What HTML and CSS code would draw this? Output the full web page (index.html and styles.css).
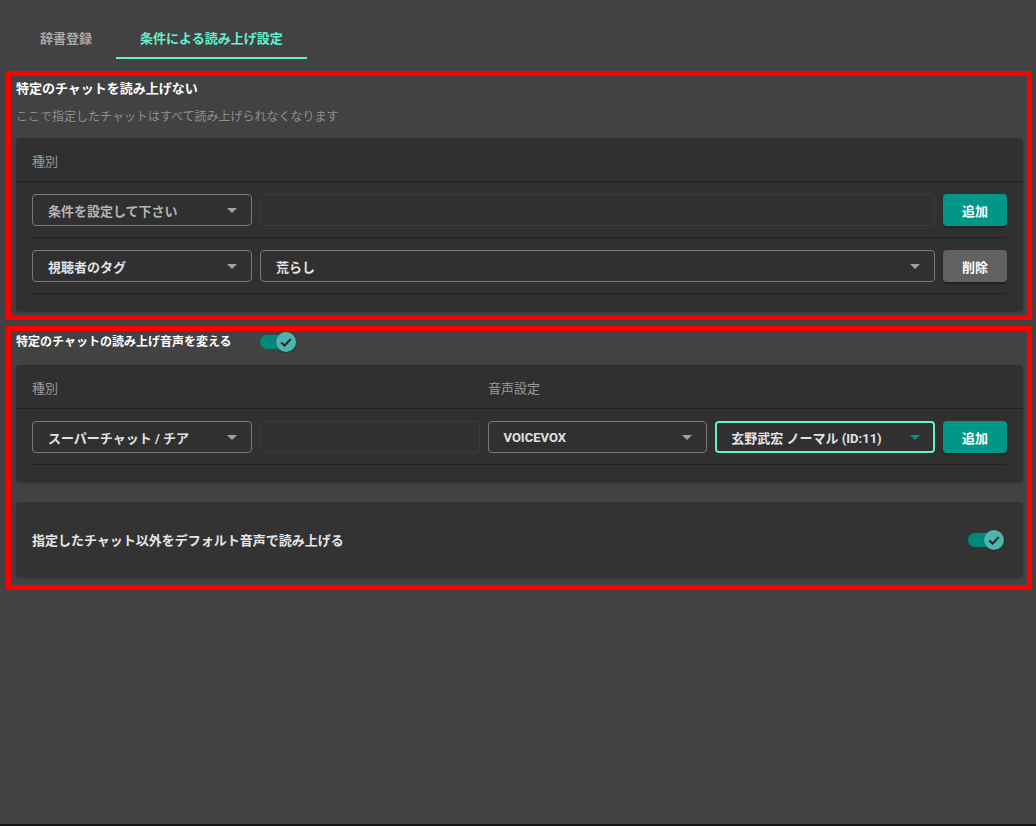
FILE: index.html
```html
<!DOCTYPE html>
<html lang="ja">
<head>
  <meta charset="UTF-8" />
  <meta name="viewport" content="width=device-width, initial-scale=1.0"/>
  <title>読み上げ設定</title>
  <link rel="stylesheet" href="styles.css">
</head>
<body>
  <div class="page">

    <!-- Tabs -->
    <div class="tabs">
      <div class="tab">辞書登録</div>
      <div class="tab active">条件による読み上げ設定</div>
    </div>

    <!-- Ignore chats -->
    <section class="panel panel-ignore">
      <div class="panel-title">特定のチャットを読み上げない</div>
      <div class="panel-desc">ここで指定したチャットはすべて読み上げられなくなります</div>

      <div class="card">
        <div class="card-head grid-ignore">
          <span class="col-label">種別</span>
        </div>
        <div class="rule-row grid-ignore">
          <div class="select placeholder">条件を設定して下さい<span class="caret"></span></div>
          <div class="text-field"></div>
          <button class="btn btn-add">追加</button>
        </div>
        <div class="rule-row grid-ignore">
          <div class="select">視聴者のタグ<span class="caret"></span></div>
          <div class="select outlined">荒らし<span class="caret"></span></div>
          <button class="btn btn-remove">削除</button>
        </div>
      </div>
    </section>

    <!-- Voice per chat -->
    <section class="panel panel-voice">
      <div class="panel-head">
        <div class="panel-title">特定のチャットの読み上げ音声を変える</div>
        <div class="switch on">
          <div class="switch-track"></div>
          <div class="switch-thumb">
            <svg width="20" height="20" viewBox="0 0 20 20"><path d="M5.2 10.4 L8.6 13.6 L14.8 7" fill="none" stroke="#1f2a28" stroke-width="2"/></svg>
          </div>
        </div>
      </div>

      <div class="card">
        <div class="card-head grid-voice-head">
          <span class="col-label">種別</span>
          <span class="col-label">音声設定</span>
        </div>
        <div class="rule-row grid-voice">
          <div class="select">スーパーチャット / チア<span class="caret"></span></div>
          <div class="text-field"></div>
          <div class="select">VOICEVOX<span class="caret"></span></div>
          <div class="select focused">玄野武宏 ノーマル (ID:11)<span class="caret"></span></div>
          <button class="btn btn-add">追加</button>
        </div>
      </div>

      <div class="card card-option">
        <span class="option-label">指定したチャット以外をデフォルト音声で読み上げる</span>
        <div class="switch on">
          <div class="switch-track"></div>
          <div class="switch-thumb">
            <svg width="20" height="20" viewBox="0 0 20 20"><path d="M5.2 10.4 L8.6 13.6 L14.8 7" fill="none" stroke="#1f2a28" stroke-width="2"/></svg>
          </div>
        </div>
      </div>
    </section>

  </div>
</body>
</html>
```

FILE: styles.css
```css
* {
  margin: 0;
  padding: 0;
  box-sizing: border-box;
}

body {
  font-family: Roboto, "Noto Sans CJK JP", sans-serif;
  background-color: #151515;
  color: #fff;
  font-size: 13px;
}

.page {
  height: 824px;
  background: #424242;
  overflow: hidden;
}

/* Tabs */
.tabs {
  display: flex;
  margin: 17px 0 0 16px;
}

.tab {
  height: 42px;
  padding: 0 24px;
  display: flex;
  align-items: center;
  font-weight: 700;
  color: #a8a8a8;
  border-bottom: 2px solid transparent;
  padding-top: 1px;
}

.tab.active {
  color: #64f0cf;
  border-bottom-color: #64f0cf;
}

/* Panels (red outlined sections) */
.panel {
  width: 1026px;
  margin-left: 6px;
  border: 5px solid #ff0000;
  padding: 0 4px 0 5px;
}

.panel-ignore {
  margin-top: 12px;
  padding-top: 3px;
  padding-bottom: 4px;
}

.panel-voice {
  margin-top: 6px;
  padding-bottom: 8px;
}

.panel-head {
  display: flex;
  align-items: center;
  height: 22px;
}

.panel-title {
  font-weight: 700;
  line-height: 20px;
  color: #fff;
}

.panel-head .panel-title {
  font-size: 12px;
}

.panel-head .switch {
  margin-left: 28px;
}

.panel-desc {
  margin-top: 9px;
  font-size: 12px;
  line-height: 18px;
  color: #8f8f8f;
}

/* Cards */
.card {
  margin-top: 12px;
  background: #303030;
  border-radius: 4px;
  box-shadow: 0 1px 2px rgba(0,0,0,0.25);
  padding: 0 16px 17px;
}

.card-head {
  height: 44px;
  margin: 0 -16px;
  padding: 2px 16px 0;
  border-bottom: 1px solid #222;
  align-items: center;
}

.col-label {
  color: #9a9a9a;
}

.grid-ignore {
  display: grid;
  grid-template-columns: 220px 1fr 64px;
  gap: 8px;
}

.grid-voice {
  display: grid;
  grid-template-columns: 1fr 1fr 1fr 1fr 64px;
  gap: 8px;
}

.grid-voice-head {
  display: grid;
  grid-template-columns: 448px 1fr;
  gap: 8px;
}

.rule-row {
  padding: 12px 0 11px;
  border-bottom: 1px solid #232323;
}

/* Form controls */
.select {
  height: 32px;
  border: 1px solid #7a7a7a;
  border-radius: 4px;
  display: flex;
  align-items: center;
  justify-content: space-between;
  padding: 0 14px 0 15px;
  font-weight: 700;
  color: #e2e2e2;
}

.select.placeholder {
  color: #b4b4b4;
}

.select.focused {
  border: 2px solid #64f0cf;
  padding: 0 13px 0 14px;
}

.caret {
  width: 0;
  height: 0;
  border-left: 5px solid transparent;
  border-right: 5px solid transparent;
  border-top: 5px solid #a0a0a0;
}

.select.focused .caret {
  border-top-color: #00968a;
}

.text-field {
  height: 32px;
  border: 1px solid #3b3b3b;
  border-radius: 4px;
}

.btn {
  height: 32px;
  border: none;
  border-radius: 4px;
  font-family: inherit;
  font-size: 13px;
  font-weight: 700;
  color: #fff;
  box-shadow: 0 2px 2px rgba(0,0,0,0.3);
}

.btn-add {
  background: #009688;
}

.btn-remove {
  background: #616161;
}

/* Option card */
.card-option {
  margin-top: 20px;
  height: 75px;
  background: #333;
  padding: 0 19px 0 16px;
  display: flex;
  align-items: center;
  justify-content: space-between;
}

.option-label {
  font-weight: 700;
  color: #e6e6e6;
}

/* Switch */
.switch {
  position: relative;
  width: 36px;
  height: 20px;
}

.switch-track {
  position: absolute;
  left: 0;
  top: 3px;
  width: 34px;
  height: 14px;
  border-radius: 7px;
  background: #00897b;
}

.switch-thumb {
  position: absolute;
  left: 16px;
  top: 0;
  width: 20px;
  height: 20px;
  border-radius: 50%;
  background: #4db6ac;
  box-shadow: 0 1px 2px rgba(0,0,0,0.3);
}

.switch-thumb svg {
  display: block;
}
```
